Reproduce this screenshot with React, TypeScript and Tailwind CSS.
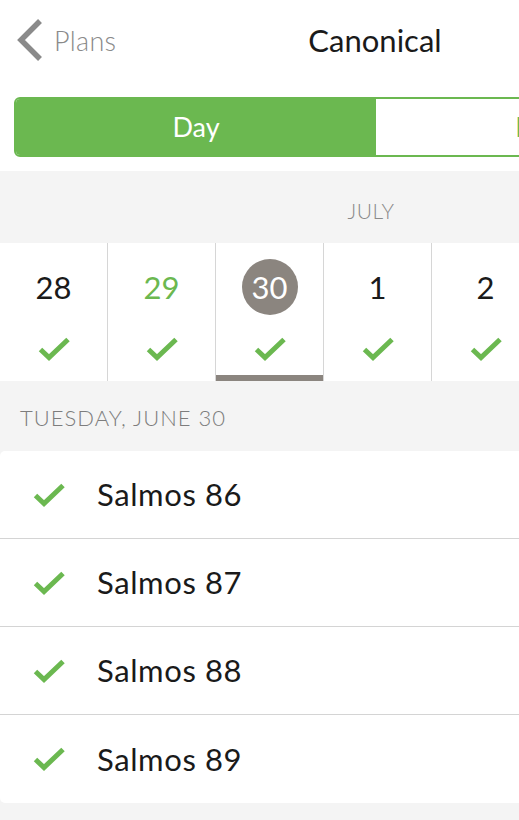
import React from "react";

const GREEN = "#6bb850";

function Check({ className = "" }: { className?: string }) {
  return (
    <svg width="32" height="24" viewBox="0 0 32 24" className={className}>
      <path d="M2.5 12.5 L11 20.5 L30 2.5" fill="none" stroke={GREEN} strokeWidth="5" strokeLinejoin="miter" />
    </svg>
  );
}

const days = [
  { n: "28", color: "text-[#1a1a1a]" },
  { n: "29", color: "text-[#6bb850]" },
  { n: "30", selected: true, color: "text-white" },
  { n: "1", color: "text-[#1a1a1a]" },
  { n: "2", color: "text-[#1a1a1a]" },
  { n: "3", color: "text-[#1a1a1a]" },
  { n: "4", color: "text-[#1a1a1a]" },
];

const readings = ["Salmos 86", "Salmos 87", "Salmos 88", "Salmos 89"];

export default function App() {
  return (
    <div
      className="w-[519px] h-[820px] overflow-hidden bg-[#f4f4f4]"
      style={{ fontFamily: "Lato, 'Noto Sans', sans-serif" }}
    >
      <div className="w-[750px]">
        <div className="bg-white">
          {/* Header */}
          <div className="relative h-[80px] flex items-center">
            <div className="flex items-center pl-[17px]">
              <svg width="26" height="42" viewBox="0 0 26 42">
                <path d="M23 2 L4 21 L23 40" fill="none" stroke="#8a8a8a" strokeWidth="5.5" />
              </svg>
              <span className="ml-[11px] text-[27px] font-light text-[#8a8a8a] leading-none tracking-[0.3px]">Plans</span>
            </div>
            <div className="absolute inset-x-0 top-0 h-full flex items-center justify-center pointer-events-none">
              <span className="text-[31px] text-[#1a1a1a] leading-none">Canonical</span>
            </div>
          </div>
          {/* Segmented control */}
          <div className="pt-[17px] pb-[14px] px-[14px]">
            <div className="flex h-[60px] rounded-[6px] border-2 border-[#6bb850] overflow-hidden">
              <div className="w-[360px] bg-[#6bb850] flex items-center justify-center text-white text-[27px]">
                Day
              </div>
              <div className="flex-1 bg-white flex items-center justify-center text-[#6bb850] text-[27px]">
                Month
              </div>
            </div>
          </div>
        </div>

        {/* Month label */}
        <div className="h-[72px] flex items-center justify-center">
          <span className="text-[21px] font-light text-[#8a8a8a] pt-[8px] pr-[8px] tracking-[0.5px]">JULY</span>
        </div>

        {/* Day strip */}
        <div className="flex bg-white h-[138px]">
          {days.map((d, i) => (
            <div
              key={i}
              className="relative w-[108px] shrink-0 border-r border-[#d6d6d6] flex flex-col items-center"
            >
              <div className="h-[88px] flex items-center justify-center">
                {d.selected ? (
                  <div className="w-[56px] h-[56px] rounded-full bg-[#8b857f] flex items-center justify-center text-white text-[31px] leading-none">
                    30
                  </div>
                ) : (
                  <span className={`text-[31px] leading-none ${d.color}`}>{d.n}</span>
                )}
              </div>
              <Check className="mt-[6px]" />
              {d.selected && (
                <div className="absolute left-0 right-0 bottom-0 h-[6px] bg-[#8b857f]" />
              )}
            </div>
          ))}
        </div>

        {/* Date heading */}
        <div className="h-[70px] flex items-center pl-[20px]">
          <span className="text-[22px] font-light text-[#7d7d7d] tracking-[1px] pt-[3px]">TUESDAY, JUNE 30</span>
        </div>

        {/* Readings */}
        <div className="bg-white rounded-[5px]">
          {readings.map((r, i) => (
            <div
              key={r}
              className={`h-[88px] flex items-center ${i < readings.length - 1 ? "border-b border-[#d4d4d4]" : ""}`}
            >
              <Check className="ml-[33px]" />
              <span className="ml-[32px] text-[31px] text-[#1a1a1a] tracking-[0.6px]">{r}</span>
            </div>
          ))}
        </div>
      </div>
    </div>
  );
}
